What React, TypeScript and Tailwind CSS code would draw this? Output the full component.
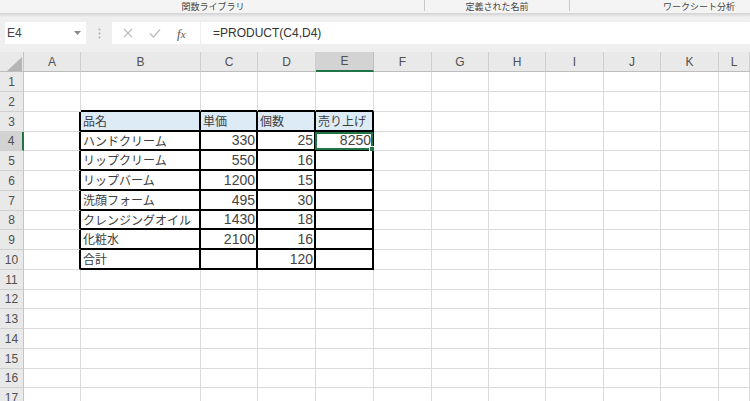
import React from "react";

const colW = [
  "w-[24px]",
  "w-[57px]",
  "w-[120px]",
  "w-[57px]",
  "w-[58px]",
  "w-[58px]",
  "w-[58px]",
  "w-[57px]",
  "w-[57px]",
  "w-[58px]",
  "w-[57px]",
  "w-[58px]",
  "flex-1",
];

const rowH = [
  "h-[20px]", "h-[20px]", "h-[20px]", "h-[19px]", "h-[20px]", "h-[20px]", "h-[20px]", "h-[19px]",
  "h-[20px]", "h-[20px]", "h-[20px]", "h-[19px]", "h-[20px]", "h-[20px]", "h-[20px]", "h-[19px]", "h-[20px]",
];

const letters = ["", "A", "B", "C", "D", "E", "F", "G", "H", "I", "J", "K", "L"];

const data: Record<number, (string | number)[]> = {
  3: ["品名", "単価", "個数", "売り上げ"],
  4: ["ハンドクリーム", 330, 25, 8250],
  5: ["リップクリーム", 550, 16, ""],
  6: ["リップバーム", 1200, 15, ""],
  7: ["洗顔フォーム", 495, 30, ""],
  8: ["クレンジングオイル", 1430, 18, ""],
  9: ["化粧水", 2100, 16, ""],
  10: ["合計", "", 120, ""],
};

const jp = "font-['Noto_Sans_CJK_JP',sans-serif]";

function CornerCell() {
  return (
    <div className="w-[24px] h-full shrink-0 bg-[#e9e9e9] border-r border-r-[#c4c4c4] border-b border-b-[#bdbdbd] relative">
      <svg className="absolute left-[7px] top-[5px]" width="15" height="14" viewBox="0 0 15 14">
        <polygon points="0,14 15,14 15,0" fill="#b5b5b5" />
      </svg>
    </div>
  );
}

function HeaderRow() {
  return (
    <div className="flex h-[20px]">
      <CornerCell />
      {letters.slice(1).map((l, i) => {
        const c = i + 1;
        const sel = c === 5;
        return (
          <div
            key={l}
            className={
              colW[c] +
              " shrink-0 flex items-center justify-center font-['Liberation_Sans',sans-serif] text-[12px] text-[#505050] " +
              (sel
                ? "bg-[#d3d3d3] border-b-2 border-b-[#217346] border-r border-r-[#bdbdbd]"
                : "bg-[#e9e9e9] border-b border-b-[#bdbdbd] border-r border-r-[#cfcfcf]")
            }
          >
            {l}
          </div>
        );
      })}
    </div>
  );
}

function GridRow({ r }: { r: number }) {
  const cells = [];
  for (let c = 0; c < 13; c++) {
    if (c === 0) {
      cells.push(
        <div
          key={c}
          className={
            "w-[24px] shrink-0 flex items-center justify-center font-['Liberation_Sans',sans-serif] text-[12px] text-[#505050] border-b border-b-[#d0d0d0] " +
            (r === 4
              ? "bg-[#d3d3d3] border-r-2 border-r-[#217346]"
              : "bg-[#e9e9e9] border-r border-r-[#c4c4c4]")
          }
        >
          {r}
        </div>
      );
      continue;
    }
    const inTable = r >= 3 && r <= 10 && c >= 2 && c <= 5;
    let cls = colW[c] + " shrink-0 relative flex items-center ";
    if (inTable) {
      cls += "border-r-2 border-b-2 border-black ";
      if (r === 3) cls += "bg-[#ddebf7] ";
    } else if (c === 1 && r >= 3 && r <= 10) {
      cls += "border-r-2 border-r-black border-b border-b-[#dadada] ";
    } else if (r === 2 && c >= 2 && c <= 5) {
      cls += "border-b-2 border-b-black border-r border-r-[#dadada] ";
    } else {
      cls += "border-r border-b border-[#dadada] ";
    }
    let content: React.ReactNode = null;
    if (inTable) {
      const v = data[r][c - 2];
      if (typeof v === "number") {
        cls += "justify-end pr-[1px]";
        content = (
          <span className="font-['Liberation_Sans',sans-serif] text-[14px] text-[#444]">{v}</span>
        );
      } else if (v !== "") {
        cls += "pl-[2px]";
        content = <span className={jp + " text-[12px] text-[#3c3c3c] whitespace-nowrap"}>{v}</span>;
      }
    }
    const selected = r === 4 && c === 5;
    cells.push(
      <div key={c} className={cls}>
        {content}
        {selected && (
          <>
            <div className="absolute left-[-1px] top-0 right-[-1px] bottom-[-1px] border-2 border-[#217346]" />
            <div className="absolute right-[-3px] bottom-[-3px] w-[6px] h-[6px] bg-[#217346] border border-white" />
          </>
        )}
      </div>
    );
  }
  return <div className={"flex " + rowH[r - 1]}>{cells}</div>;
}

export default function App() {
  return (
    <div className="w-[750px] h-[401px] overflow-hidden bg-white">
      {/* ribbon group labels */}
      <div className={"h-[13px] bg-[#f4f4f4] flex text-[9px] leading-[13px] text-[#444] " + jp}>
        <div className="w-[424px] flex justify-center pl-[2px]">関数ライブラリ</div>
        <div className="w-px h-[11px] bg-[#c8c8c8]" />
        <div className="w-[144px] flex justify-center">定義された名前</div>
        <div className="w-px h-[11px] bg-[#c8c8c8]" />
        <div className="flex-1 pl-[93px] whitespace-nowrap">ワークシート分析</div>
      </div>
      <div className="h-[4px] bg-gradient-to-b from-[#d2d2d2] to-[#efefef]" />
      {/* formula bar */}
      <div className="h-[35px] bg-[#efefef] pt-[5px]">
        <div className="flex h-[22px] items-stretch">
          <div className="ml-[5px] w-[81px] bg-white flex items-center justify-between px-[2px]">
            <span className="font-['Liberation_Sans',sans-serif] text-[12px] text-[#444]">E4</span>
            <svg width="7" height="4" viewBox="0 0 7 4" className="mr-[3px]">
              <polygon points="0,0 7,0 3.5,4" fill="#8a8a8a" />
            </svg>
          </div>
          <div className="w-[26px] flex items-center justify-center">
            <svg width="3" height="11" viewBox="0 0 3 11">
              <circle cx="1.5" cy="1.5" r="1" fill="#b0b0b0" />
              <circle cx="1.5" cy="5.5" r="1" fill="#b0b0b0" />
              <circle cx="1.5" cy="9.5" r="1" fill="#b0b0b0" />
            </svg>
          </div>
          <div className="w-[88px] bg-white flex items-center">
            <svg width="10" height="10" viewBox="0 0 10 10" className="ml-[11px]">
              <path d="M1 1 L9 9 M9 1 L1 9" stroke="#bdbdbd" strokeWidth="1.2" fill="none" />
            </svg>
            <svg width="12" height="10" viewBox="0 0 12 10" className="ml-[16px]">
              <path d="M1 5.5 L4.5 9 L11 1.5" stroke="#bdbdbd" strokeWidth="1.3" fill="none" />
            </svg>
            <span className="ml-[16px] font-['Liberation_Serif',serif] italic text-[13px] text-[#555] leading-none">
              f<span className="text-[11px]">x</span>
            </span>
          </div>
          <div className="ml-px flex-1 bg-white flex items-center pl-[12px]">
            <span className="font-['Liberation_Sans',sans-serif] text-[12px] text-[#333]">
              =PRODUCT(C4,D4)
            </span>
          </div>
        </div>
      </div>
      {/* grid */}
      <HeaderRow />
      {Array.from({ length: 17 }, (_, i) => (
        <GridRow key={i} r={i + 1} />
      ))}
    </div>
  );
}
